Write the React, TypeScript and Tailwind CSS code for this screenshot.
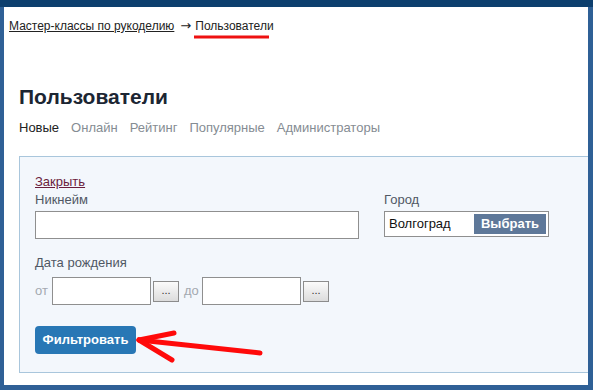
import React from "react";

const font = { fontFamily: '"Liberation Sans", Arial, sans-serif' };

function DotsButton() {
  return (
    <button className="w-[26px] h-[21px] border border-[#8c8c8c] bg-gradient-to-b from-[#fbfbfb] to-[#dcdcdc] text-[11px] leading-none text-[#333] flex items-end justify-center pb-[5px]">
      ...
    </button>
  );
}

export default function App() {
  const tabs = ["Онлайн", "Рейтинг", "Популярные", "Администраторы"];

  return (
    <div className="w-[593px] h-[390px] bg-[#2f6096] flex flex-col overflow-hidden" style={font}>
      <div className="h-[7px] bg-[#0d3f6e] shrink-0" />
      <div className="flex-1 pl-[4px] pr-[5px] pb-[5px] flex">
        <div className="relative flex-1 bg-white flex flex-col">
          {/* breadcrumb */}
          <div className="pl-[5px] pt-[11px] text-[12px] leading-[16px] text-[#222] flex items-center">
            <a href="#" className="underline text-[#222]">Мастер-классы по рукоделию</a>
            <span className="ml-[6px] mr-[4px] text-[13px]" style={{ fontFamily: '"DejaVu Sans", sans-serif' }}>→</span>
            <span>Пользователи</span>
          </div>

          <div className="pl-[15px]">
            <h1 className="mt-[50px] text-[21px] leading-[26px] font-bold text-[#1c2633]">Пользователи</h1>
            <div className="mt-[10px] flex gap-[12px] text-[13px] leading-[16px] text-[#858c93]">
              <span className="text-[#222]">Новые</span>
              {tabs.map((t) => (
                <span key={t}>{t}</span>
              ))}
            </div>
          </div>

          {/* filter panel */}
          <div className="ml-[15px] mt-[20px] h-[217px] border-t border-l border-b border-[#a9c6dc] bg-[#f3f7fc] pl-[15px] pt-[17px] text-[13px] leading-[16px]">
            <a href="#" className="underline text-[#6b1d3c]">Закрыть</a>
            <div className="flex gap-[25px] mt-[2px]">
              <div className="w-[324px]">
                <div className="text-[#505864]">Никнейм</div>
                <input className="mt-[3px] w-[324px] h-[28px] bg-white border border-[#8f8f8f] outline-none" />
              </div>
              <div>
                <div className="text-[#505864]">Город</div>
                <div className="mt-[3px] w-[165px] h-[26px] bg-white border border-[#8f8f8f] flex items-center justify-between pl-[4px] pr-[2px]">
                  <span className="text-[#111]">Волгоград</span>
                  <span className="w-[72px] h-[20px] bg-[#5e7899] text-white font-bold flex items-center justify-center">Выбрать</span>
                </div>
              </div>
            </div>

            <div className="mt-[16px] text-[#505864]">Дата рождения</div>
            <div className="mt-[6px] flex items-center">
              <span className="text-[#a3a9b0] w-[17px]">от</span>
              <input className="w-[99px] h-[28px] bg-white border border-[#8f8f8f] outline-none" />
              <div className="ml-[2px]"><DotsButton /></div>
              <span className="text-[#a3a9b0] ml-[5px] w-[18px]">до</span>
              <input className="w-[99px] h-[28px] bg-white border border-[#8f8f8f] outline-none" />
              <div className="ml-[2px]"><DotsButton /></div>
            </div>

            <button className="mt-[21px] w-[101px] h-[28px] rounded-[4px] bg-[#2877b5] text-white font-bold text-[13px]">
              Фильтровать
            </button>
          </div>

          {/* annotations */}
          <svg className="absolute inset-0 pointer-events-none" width="584" height="378">
            <line x1="190" y1="30" x2="265" y2="30" stroke="#ee1111" strokeWidth="3" />
            <g stroke="#ff0a0a" strokeWidth="5" strokeLinecap="round" fill="none">
              <line x1="135" y1="333" x2="256" y2="346" />
              <line x1="135" y1="333" x2="170" y2="326" />
              <line x1="135" y1="333" x2="168" y2="353" />
            </g>
          </svg>
        </div>
      </div>
    </div>
  );
}
